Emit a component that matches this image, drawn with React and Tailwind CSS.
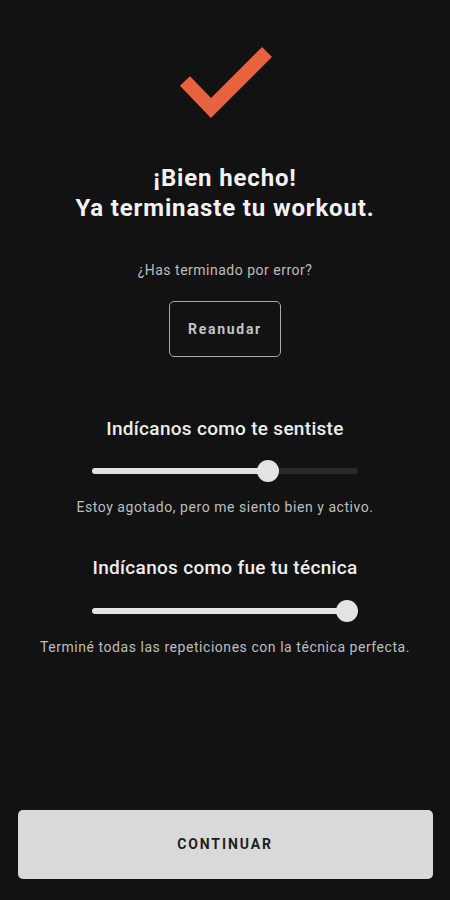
import React from "react";

function Slider({ pct }) {
  return (
    <div className="relative w-[266px] h-[22px] flex items-center">
      <div className="w-full h-[6px] rounded-full bg-[#2a2a2a] flex">
        <div className="h-full rounded-full bg-[#e3e3e3]" style={{ width: `${pct}%` }} />
      </div>
      <div
        className="absolute top-0 w-[22px] h-[22px] rounded-full bg-[#e3e3e3] -translate-x-1/2"
        style={{ left: `${pct}%` }}
      />
    </div>
  );
}

export default function App() {
  return (
    <div
      className="w-full h-[900px] bg-[#131213] flex flex-col items-center text-white"
      style={{ fontFamily: "Roboto, 'Noto Sans', sans-serif" }}
    >
      <svg width="100" height="80" viewBox="0 0 100 80" className="mt-[42px] block shrink-0">
        <polyline
          points="10,39 36,66 92,10"
          fill="none"
          stroke="#e8623f"
          strokeWidth="14"
          strokeLinecap="butt"
          strokeLinejoin="miter"
        />
      </svg>
      <h1 className="mt-[41px] text-[24px] leading-[30px] font-bold tracking-[0.85px] text-center text-[#f2f2f2]">
        ¡Bien hecho!
        <br />
        Ya terminaste tu workout.
      </h1>
      <p className="mt-[37px] text-[14px] leading-[20px] tracking-[0.5px] text-[#bdbdbd]">¿Has terminado por error?</p>
      <button className="mt-[21px] w-[112px] h-[56px] rounded-[5px] border-[1.5px] border-[#a8a8a8] text-[14px] font-bold tracking-[1.7px] text-[#c4c4c4]">
        Reanudar
      </button>
      <h2 className="mt-[60px] text-[19px] leading-[24px] font-medium tracking-[0.3px] text-[#ededed]">Indícanos como te sentiste</h2>
      <div className="mt-[19px]">
        <Slider pct={66} />
      </div>
      <p className="mt-[16px] text-[14px] leading-[18px] tracking-[0.55px] text-[#bdbdbd]">Estoy agotado, pero me siento bien y activo.</p>
      <h2 className="mt-[40px] text-[19px] leading-[24px] font-medium tracking-[0.3px] text-[#ededed]">Indícanos como fue tu técnica</h2>
      <div className="mt-[20px]">
        <Slider pct={96} />
      </div>
      <p className="mt-[16px] text-[14px] leading-[18px] tracking-[0.55px] text-[#bdbdbd]">Terminé todas las repeticiones con la técnica perfecta.</p>
      <div className="flex-1" />
      <button className="mb-[21px] w-[415px] h-[69px] rounded-[5px] bg-[#d9d9d9] text-[14px] font-bold tracking-[1.9px] text-[#1e1e1e]">
        CONTINUAR
      </button>
    </div>
  );
}
